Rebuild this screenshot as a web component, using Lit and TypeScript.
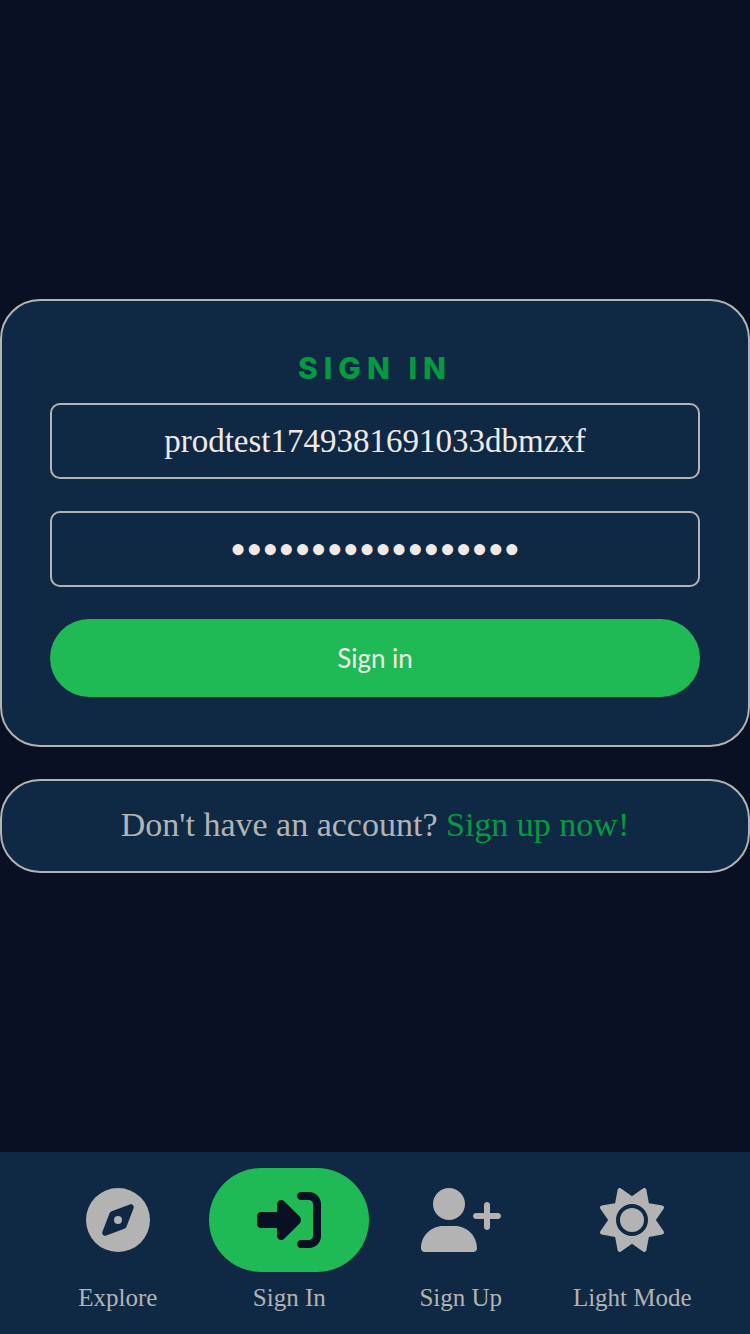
import { LitElement, html, css, svg } from "lit";
import { customElement, property, state } from "lit/decorators.js";
import { classMap } from "lit/directives/class-map.js";

interface NavItem {
  label: string;
  href: string;
  viewBox: string;
  wide?: boolean;
  path: string;
}

const NAV: NavItem[] = [
  {
    label: "Explore",
    href: "#explore",
    viewBox: "0 0 512 512",
    path: "M256 512A256 256 0 1 0 256 0a256 256 0 1 0 0 512zm50.7-186.9L162.4 380.6c-19.4 7.5-38.5-11.6-31-31l55.5-144.3c3.3-8.5 9.9-15.1 18.4-18.4l144.3-55.5c19.4-7.5 38.5 11.6 31 31L325.1 306.7c-3.2 8.5-9.9 15.1-18.4 18.4zM288 256a32 32 0 1 0 -64 0 32 32 0 1 0 64 0z",
  },
  {
    label: "Sign In",
    href: "#signin",
    viewBox: "0 0 512 512",
    path: "M217.9 105.9L340.7 228.7c7.2 7.2 11.3 17.1 11.3 27.3s-4.1 20.1-11.3 27.3L217.9 406.1c-6.4 6.4-15 9.9-24 9.9c-18.7 0-33.9-15.2-33.9-33.9l0-62.1L32 320c-17.7 0-32-14.3-32-32l0-64c0-17.7 14.3-32 32-32l128 0 0-62.1c0-18.7 15.2-33.9 33.9-33.9c9 0 17.6 3.6 24 9.9zM352 416l64 0c17.7 0 32-14.3 32-32l0-256c0-17.7-14.3-32-32-32l-64 0c-17.7 0-32-14.3-32-32s14.3-32 32-32l64 0c53 0 96 43 96 96l0 256c0 53-43 96-96 96l-64 0c-17.7 0-32-14.3-32-32s14.3-32 32-32z",
  },
  {
    label: "Sign Up",
    href: "#signup",
    viewBox: "0 0 640 512",
    wide: true,
    path: "M96 128a128 128 0 1 1 256 0A128 128 0 1 1 96 128zM0 482.3C0 383.8 79.8 304 178.3 304l91.4 0C368.2 304 448 383.8 448 482.3c0 16.4-13.3 29.7-29.7 29.7L29.7 512C13.3 512 0 498.7 0 482.3zM504 312l0-64-64 0c-13.3 0-24-10.7-24-24s10.7-24 24-24l64 0 0-64c0-13.3 10.7-24 24-24s24 10.7 24 24l0 64 64 0c13.3 0 24 10.7 24 24s-10.7 24-24 24l-64 0 0 64c0 13.3-10.7 24-24 24s-24-10.7-24-24z",
  },
  {
    label: "Light Mode",
    href: "#light",
    viewBox: "0 0 512 512",
    path: "M361.5 1.2c5 2.1 8.6 6.6 9.6 11.9L391 121l107.9 19.8c5.3 1 9.8 4.6 11.9 9.6s1.5 10.7-1.6 15.2L446.9 256l62.3 90.3c3.1 4.5 3.7 10.2 1.6 15.2s-6.6 8.6-11.9 9.6L391 391 371.1 498.9c-1 5.3-4.6 9.8-9.6 11.9s-10.7 1.5-15.2-1.6L256 446.9l-90.3 62.3c-4.5 3.1-10.2 3.7-15.2 1.6s-8.6-6.6-9.6-11.9L121 391 13.1 371.1c-5.3-1-9.8-4.6-11.9-9.6s-1.5-10.7 1.6-15.2L65.1 256 2.8 165.7c-3.1-4.5-3.7-10.2-1.6-15.2s6.6-8.6 11.9-9.6L121 121 140.9 13.1c1-5.3 4.6-9.8 9.6-11.9s10.7-1.5 15.2 1.6L256 65.1 346.3 2.8c4.5-3.1 10.2-3.7 15.2-1.6zM160 256a96 96 0 1 1 192 0 96 96 0 1 1 -192 0zm224 0a128 128 0 1 0 -256 0 128 128 0 1 0 256 0z",
  },
];

@customElement("sign-in-form")
export class SignInForm extends LitElement {
  @state() private username = "prodtest1749381691033dbmzxf";
  @state() private password = "averysecretphrase1";

  static styles = css`
    :host {
      display: block;
    }
    .card {
      box-sizing: border-box;
      display: flex;
      flex-direction: column;
      gap: 32px;
      padding: 48px;
      border: 2px solid #b3b3b3;
      border-radius: 40px;
      background: #0f2944;
    }
    .group {
      display: flex;
      flex-direction: column;
      gap: 16px;
    }
    .title {
      margin: 0;
      text-align: center;
      font: 800 30px/38px Inter, sans-serif;
      letter-spacing: 6px;
      color: #049a40;
      text-transform: uppercase;
    }
    .field {
      box-sizing: border-box;
      width: 100%;
      height: 76px;
      margin: 0;
      padding: 0 16px;
      border: 2px solid #b3b3b3;
      border-radius: 10px;
      outline: none;
      background: transparent;
      color: #f0e9e7;
      text-align: center;
      font: 33px "Liberation Serif", serif;
    }
    .secret {
      font: 46px "Liberation Serif", serif;
    }
    .submit {
      height: 78px;
      padding: 0 32px;
      border: 0;
      border-radius: 39px;
      background: #1fba55;
      color: #f0e9e7;
      font: 26px Lato, sans-serif;
      cursor: pointer;
    }
  `;

  render() {
    return html`
      <form class="card" @submit=${(e: Event) => e.preventDefault()}>
        <div class="group">
          <h1 class="title">Sign in</h1>
          <input
            class="field"
            type="text"
            aria-label="Username"
            .value=${this.username}
            @input=${(e: Event) => (this.username = (e.target as HTMLInputElement).value)}
          />
        </div>
        <input
          class="field secret"
          type="password"
          aria-label="Password"
          .value=${this.password}
          @input=${(e: Event) => (this.password = (e.target as HTMLInputElement).value)}
        />
        <button class="submit" type="submit">Sign in</button>
      </form>
    `;
  }
}

@customElement("nav-bar")
export class NavBar extends LitElement {
  @property() active = "";

  static styles = css`
    :host {
      display: block;
    }
    .bar {
      display: grid;
      grid-template-columns: repeat(4, 1fr);
      padding: 16px 32px 20px;
      background: #0f2944;
    }
    .item {
      display: flex;
      flex-direction: column;
      align-items: center;
      gap: 10px;
      color: #b3b3b3;
      text-decoration: none;
      font: 25px/32px "Liberation Serif", serif;
    }
    .pill {
      display: flex;
      align-items: center;
      justify-content: center;
      width: 160px;
      max-width: 100%;
      height: 104px;
      border-radius: 52px;
    }
    .pill.active {
      background: #1fba55;
      color: #0a1024;
    }
    .icon {
      width: 64px;
      height: 64px;
      fill: currentColor;
    }
    .icon.wide {
      width: 80px;
    }
  `;

  render() {
    return html`
      <nav class="bar">
        ${NAV.map(
          (n) => html`
            <a class="item" href=${n.href}>
              <span class=${classMap({ pill: true, active: n.label === this.active })}>
                <svg class=${classMap({ icon: true, wide: !!n.wide })} viewBox=${n.viewBox} aria-hidden="true">
                  ${svg`<path d=${n.path}></path>`}
                </svg>
              </span>
              <span>${n.label}</span>
            </a>
          `
        )}
      </nav>
    `;
  }
}

@customElement("app-root")
export class AppRoot extends LitElement {
  static styles = css`
    :host {
      display: flex;
      flex-direction: column;
      min-height: 100vh;
      background: #0a1024;
    }
    .main {
      flex: 1;
      display: flex;
      flex-direction: column;
      justify-content: center;
      gap: 32px;
      padding-top: 20px;
    }
    .prompt {
      margin: 0;
      padding: 24px 24px 26px;
      border: 2px solid #b3b3b3;
      border-radius: 40px;
      background: #0f2944;
      color: #b3b3b3;
      text-align: center;
      font: 34px/40px "Liberation Serif", serif;
    }
    .link {
      color: #049a40;
      text-decoration: none;
    }
  `;

  render() {
    return html`
      <main class="main">
        <sign-in-form></sign-in-form>
        <p class="prompt">Don't have an account? <a class="link" href="#signup">Sign up now!</a></p>
      </main>
      <nav-bar active="Sign In"></nav-bar>
    `;
  }
}
